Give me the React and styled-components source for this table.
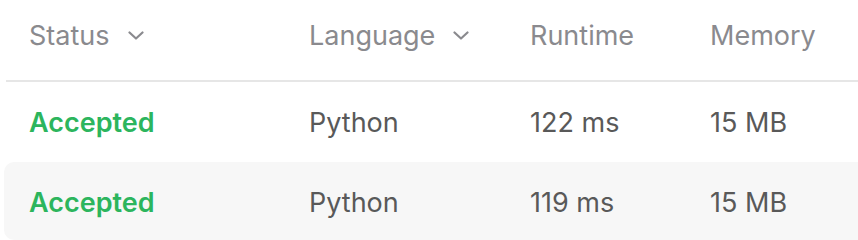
import React from "react";
import styled, { createGlobalStyle } from "styled-components";

const Global = createGlobalStyle`
  html, body { margin: 0; padding: 0; background: #ffffff; }
  body { font-family: Inter, "Noto Sans", "Liberation Sans", sans-serif; -webkit-font-smoothing: antialiased; }
`;

const Table = styled.div`
  width: 858px;
  height: 240px;
  overflow: hidden;
  display: flex;
  flex-direction: column;
`;

const Grid = styled.div`
  display: grid;
  grid-template-columns: 280px 221px 180px 1fr;
  align-items: center;
  padding-left: 25px;
  font-size: 27px;
  white-space: nowrap;
  flex-shrink: 0;
`;

const HeaderRow = styled(Grid)`
  height: 82px;
  margin-left: 6px;
  padding-left: 23px;
  padding-bottom: 10px;
  box-sizing: border-box;
  border-bottom: 2px solid #e6e6e6;
  color: #8a8a8e;
`;

const BodyRow = styled(Grid)`
  height: ${(p) => (p.$first ? "80px" : "78px")};
  margin-left: 4px;
  margin-right: -30px;
  border-radius: 10px;
  background: ${(p) => (p.$shaded ? "#f7f7f7" : "transparent")};
  color: #595959;
  padding-top: ${(p) => (p.$first ? "0" : "2px")};
  box-sizing: border-box;
`;

const HeadCell = styled.div`
  display: flex;
  align-items: center;
  gap: 18px;
`;

const Status = styled.div`
  color: #2cb55d;
  font-weight: 600;
`;

const Chevron = () => (
  <svg width="16" height="9" viewBox="0 0 16 9" fill="none">
    <path d="M1.5 1.5L8 7.5L14.5 1.5" stroke="#8a8a8e" strokeWidth="2.2" strokeLinecap="round" strokeLinejoin="round" />
  </svg>
);

const rows = [
  { status: "Accepted", lang: "Python", runtime: "122 ms", memory: "15 MB" },
  { status: "Accepted", lang: "Python", runtime: "119 ms", memory: "15 MB" },
];

export default function App() {
  return (
    <>
      <Global />
      <Table>
        <HeaderRow>
          <HeadCell>Status <Chevron /></HeadCell>
          <HeadCell>Language <Chevron /></HeadCell>
          <HeadCell>Runtime</HeadCell>
          <HeadCell>Memory</HeadCell>
        </HeaderRow>
        {rows.map((r, i) => (
          <BodyRow key={i} $first={i === 0} $shaded={i % 2 === 1}>
            <Status>{r.status}</Status>
            <div>{r.lang}</div>
            <div>{r.runtime}</div>
            <div>{r.memory}</div>
          </BodyRow>
        ))}
      </Table>
    </>
  );
}
